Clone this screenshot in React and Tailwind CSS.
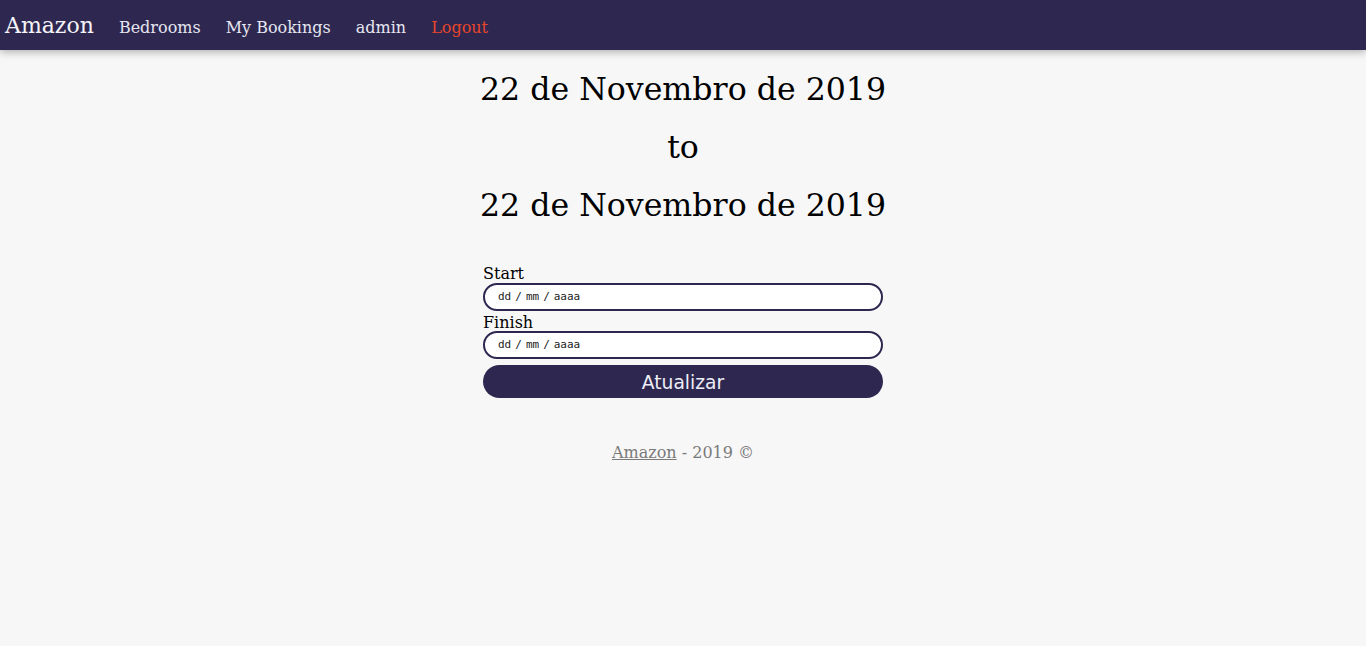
const serif = "font-['DejaVu_Serif','Liberation_Serif',serif]";

function DateField() {
  return (
    <div className="flex h-[28px] w-full items-center rounded-full border-2 border-[#2e2850] bg-white pl-[13px]">
      <span className="flex gap-[4px] font-['DejaVu_Sans_Mono',monospace] text-[11px] text-[#222]">
        <span>dd</span>
        <span>/</span>
        <span>mm</span>
        <span>/</span>
        <span>aaaa</span>
      </span>
    </div>
  );
}

export default function App() {
  return (
    <div className={`min-h-[646px] bg-[#f7f7f7] ${serif}`}>
      <nav className="flex h-[50px] items-center gap-[25px] bg-[#2e2850] pl-[5px] shadow-[0_2px_8px_rgba(0,0,0,0.3)]">
        <span className="pt-[2px] text-[22px] leading-none text-[#f4f4f8]">Amazon</span>
        <a className="pt-[5px] text-[16px] text-[#e6e6f0]">Bedrooms</a>
        <a className="pt-[5px] text-[16px] text-[#e6e6f0]">My Bookings</a>
        <a className="pt-[5px] text-[16px] text-[#e6e6f0]">admin</a>
        <a className="pt-[5px] text-[16px] text-[#e8452b]">Logout</a>
      </nav>

      <main className="flex flex-col items-center pt-[21px]">
        <div className="flex flex-col items-center gap-[21px] text-[31.6px] leading-[37px] text-black">
          <h1>22 de Novembro de 2019</h1>
          <h1>to</h1>
          <h1>22 de Novembro de 2019</h1>
        </div>

        <form className="mt-[40px] flex w-[400px] flex-col text-[16px] text-black">
          <label className="block h-[19px] leading-[19px]">Start</label>
          <DateField />
          <label className="mt-[2px] block h-[18px] leading-[19px]">Finish</label>
          <DateField />
          <button
            type="button"
            className="mt-[6px] h-[33px] w-full rounded-full bg-[#2e2850] pt-[3px] font-['DejaVu_Sans',sans-serif] text-[18.7px] leading-none text-[#eeeef8]"
          >
            Atualizar
          </button>
        </form>

        <p className="mt-[45px] text-[16px] leading-[19px] text-[#7a7a7a]">
          <a className="underline">Amazon</a> - 2019 ©
        </p>
      </main>
    </div>
  );
}
